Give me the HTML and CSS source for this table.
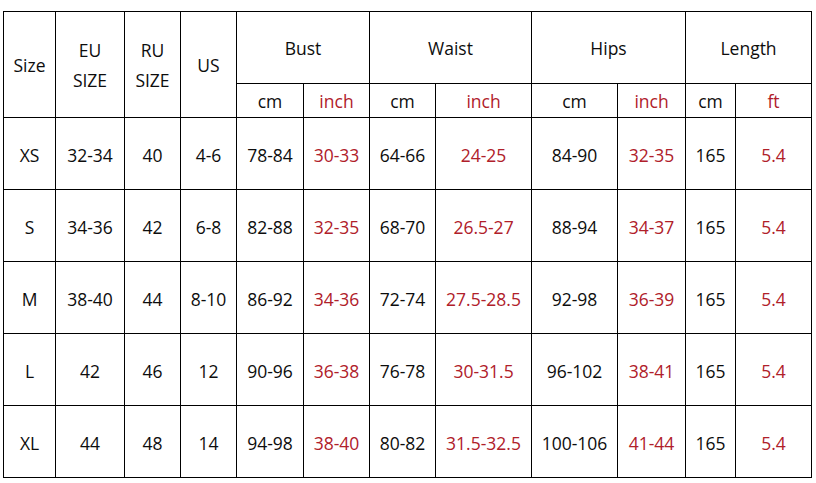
FILE: index.html
```html
<!DOCTYPE html>
<html>
<head>
<meta charset="utf-8">
<link rel="stylesheet" href="styles.css">
</head>
<body>
<table class="chart">
  <colgroup>
    <col class="c1"><col class="c2"><col class="c3"><col class="c4">
    <col class="c5"><col class="c6"><col class="c7"><col class="c8">
    <col class="c9"><col class="c10"><col class="c11"><col class="c12">
  </colgroup>
  <thead>
    <tr class="head1">
      <th rowspan="2">Size</th>
      <th rowspan="2" class="two">EU<br>SIZE</th>
      <th rowspan="2" class="two">RU<br>SIZE</th>
      <th rowspan="2">US</th>
      <th colspan="2" class="grp">Bust</th>
      <th colspan="2" class="grp">Waist</th>
      <th colspan="2" class="grp">Hips</th>
      <th colspan="2" class="grp">Length</th>
    </tr>
    <tr class="head2">
      <th>cm</th><th class="red">inch</th>
      <th>cm</th><th class="red">inch</th>
      <th>cm</th><th class="red">inch</th>
      <th>cm</th><th class="red">ft</th>
    </tr>
  </thead>
  <tbody>
    <tr><td>XS</td><td>32-34</td><td>40</td><td>4-6</td><td>78-84</td><td class="red">30-33</td><td>64-66</td><td class="red">24-25</td><td>84-90</td><td class="red">32-35</td><td>165</td><td class="red">5.4</td></tr>
    <tr><td>S</td><td>34-36</td><td>42</td><td>6-8</td><td>82-88</td><td class="red">32-35</td><td>68-70</td><td class="red">26.5-27</td><td>88-94</td><td class="red">34-37</td><td>165</td><td class="red">5.4</td></tr>
    <tr><td>M</td><td>38-40</td><td>44</td><td>8-10</td><td>86-92</td><td class="red">34-36</td><td>72-74</td><td class="red">27.5-28.5</td><td>92-98</td><td class="red">36-39</td><td>165</td><td class="red">5.4</td></tr>
    <tr><td>L</td><td>42</td><td>46</td><td>12</td><td>90-96</td><td class="red">36-38</td><td>76-78</td><td class="red">30-31.5</td><td>96-102</td><td class="red">38-41</td><td>165</td><td class="red">5.4</td></tr>
    <tr><td>XL</td><td>44</td><td>48</td><td>14</td><td>94-98</td><td class="red">38-40</td><td>80-82</td><td class="red">31.5-32.5</td><td>100-106</td><td class="red">41-44</td><td>165</td><td class="red">5.4</td></tr>
  </tbody>
</table>
</body>
</html>
```
FILE: styles.css
```css
html, body {
  margin: 0;
  padding: 0;
  background: #fff;
}
body {
  padding: 11px 0 0 3px;
  font-family: "Open Sans", "Noto Sans", sans-serif;
  color: #0d0d0d;
}
.chart {
  border-collapse: collapse;
  table-layout: fixed;
  width: 808px;
  font-size: 17.5px;
}
.c1 { width: 52px; }
.c2 { width: 69px; }
.c3 { width: 56px; }
.c4 { width: 56px; }
.c5 { width: 67px; }
.c6 { width: 66px; }
.c7 { width: 66px; }
.c8 { width: 96px; }
.c9 { width: 86px; }
.c10 { width: 68px; }
.c11 { width: 50px; }
.c12 { width: 76px; }
.chart th, .chart td {
  border: 1px solid #000;
  padding: 0;
  text-align: center;
  vertical-align: middle;
  font-weight: normal;
  white-space: nowrap;
}
.head1 { height: 72px; }
.head2 { height: 34px; }
.two { line-height: 30px; }
.grp { padding-top: 1px; }
.head2 th { padding-top: 1px; }
.chart tbody tr { height: 72px; }
.chart td { padding-top: 2px; }
.red { color: #b0202a; }
```
